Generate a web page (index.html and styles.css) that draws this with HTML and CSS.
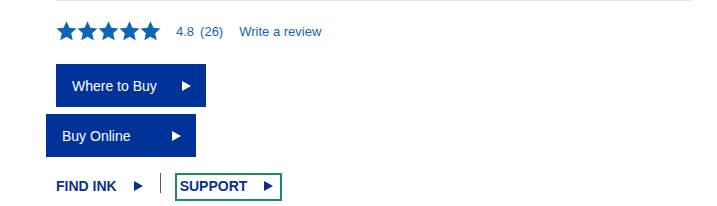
FILE: index.html
```html
<!DOCTYPE html>
<html lang="en">
<head>
<meta charset="utf-8">
<title>Product actions</title>
<link rel="stylesheet" href="styles.css">
</head>
<body>
<div class="wrap">
  <div class="rating">
    <svg class="stars" width="105" height="20" viewBox="0 0 105 20" aria-label="4.8 out of 5 stars">
      <defs>
        <linearGradient id="fill" gradientUnits="userSpaceOnUse" x1="0" y1="0" x2="105" y2="0">
          <stop offset="0.94" stop-color="#0d65b5"/>
          <stop offset="0.94" stop-color="#c9ccce"/>
        </linearGradient>
        <polygon id="star" points="10.5,0.3 13.4,6.7 20.5,7.4 15.2,12.2 16.7,19.3 10.5,15.7 4.3,19.3 5.8,12.2 0.5,7.4 7.6,6.7"/>
      </defs>
      <g fill="url(#fill)">
        <use href="#star" x="0"/>
        <use href="#star" x="21"/>
        <use href="#star" x="42"/>
        <use href="#star" x="63"/>
        <use href="#star" x="84"/>
      </g>
    </svg>
    <span class="score">4.8</span>
    <span class="count">(26)</span>
    <a class="review" href="#">Write a review</a>
  </div>
  <a class="btn btn-first" href="#"><span>Where to Buy</span><i class="tri tri-white"></i></a>
  <a class="btn btn-second" href="#"><span>Buy Online</span><i class="tri tri-white"></i></a>
  <div class="links">
    <a class="link link-ink" href="#"><span>FIND INK</span><i class="tri tri-blue"></i></a>
    <span class="divider"></span>
    <a class="link link-support" href="#"><span>SUPPORT</span><i class="tri tri-blue"></i></a>
  </div>
</div>
</body>
</html>
```

FILE: styles.css
```css
html, body {
  margin: 0;
  padding: 0;
  background: #ffffff;
}

body {
  font-family: "Liberation Sans", Arial, sans-serif;
}

a {
  text-decoration: none;
}

.wrap {
  margin-left: 56px;
  width: 636px;
  border-top: 1px solid #dfe7eb;
}

.rating {
  display: flex;
  align-items: center;
  height: 20px;
  margin-top: 20px;
  font-size: 13px;
  line-height: 15px;
  color: #1565b5;
}

.stars {
  display: block;
  flex: none;
}

.score {
  margin-left: 15px;
}

.count {
  margin-left: 6px;
}

.review {
  margin-left: 16px;
  color: #1565b5;
}

.btn {
  display: flex;
  align-items: center;
  justify-content: space-between;
  box-sizing: border-box;
  width: 150px;
  height: 43px;
  padding: 0 16px;
  background: #00339a;
  color: #ffffff;
  font-size: 14px;
  line-height: 16px;
}

.btn-first {
  margin-top: 23px;
}

.btn-second {
  margin-top: 7px;
  margin-left: -10px;
}

.tri {
  display: block;
  width: 0;
  height: 0;
  border-top: 5px solid transparent;
  border-bottom: 5px solid transparent;
  border-left: 9px solid #ffffff;
}

.tri-white {
  border-left-color: #ffffff;
  margin-right: -1px;
}

.tri-blue {
  border-left-color: #0b2f8f;
  margin-left: 17px;
}

.links {
  display: flex;
  align-items: flex-start;
  margin-top: 16px;
}

.link {
  display: flex;
  align-items: center;
  font-size: 14px;
  line-height: 16px;
  font-weight: bold;
  color: #0b2f8f;
}

.link-ink {
  padding: 5px 0 7px;
}

.divider {
  display: block;
  width: 1px;
  height: 20px;
  margin-left: 17px;
  background: #5a5a5a;
}

.link-support {
  margin-left: 14px;
  border: 2px solid #1f8a6b;
  padding: 3px 7px 5px 3px;
}
```
